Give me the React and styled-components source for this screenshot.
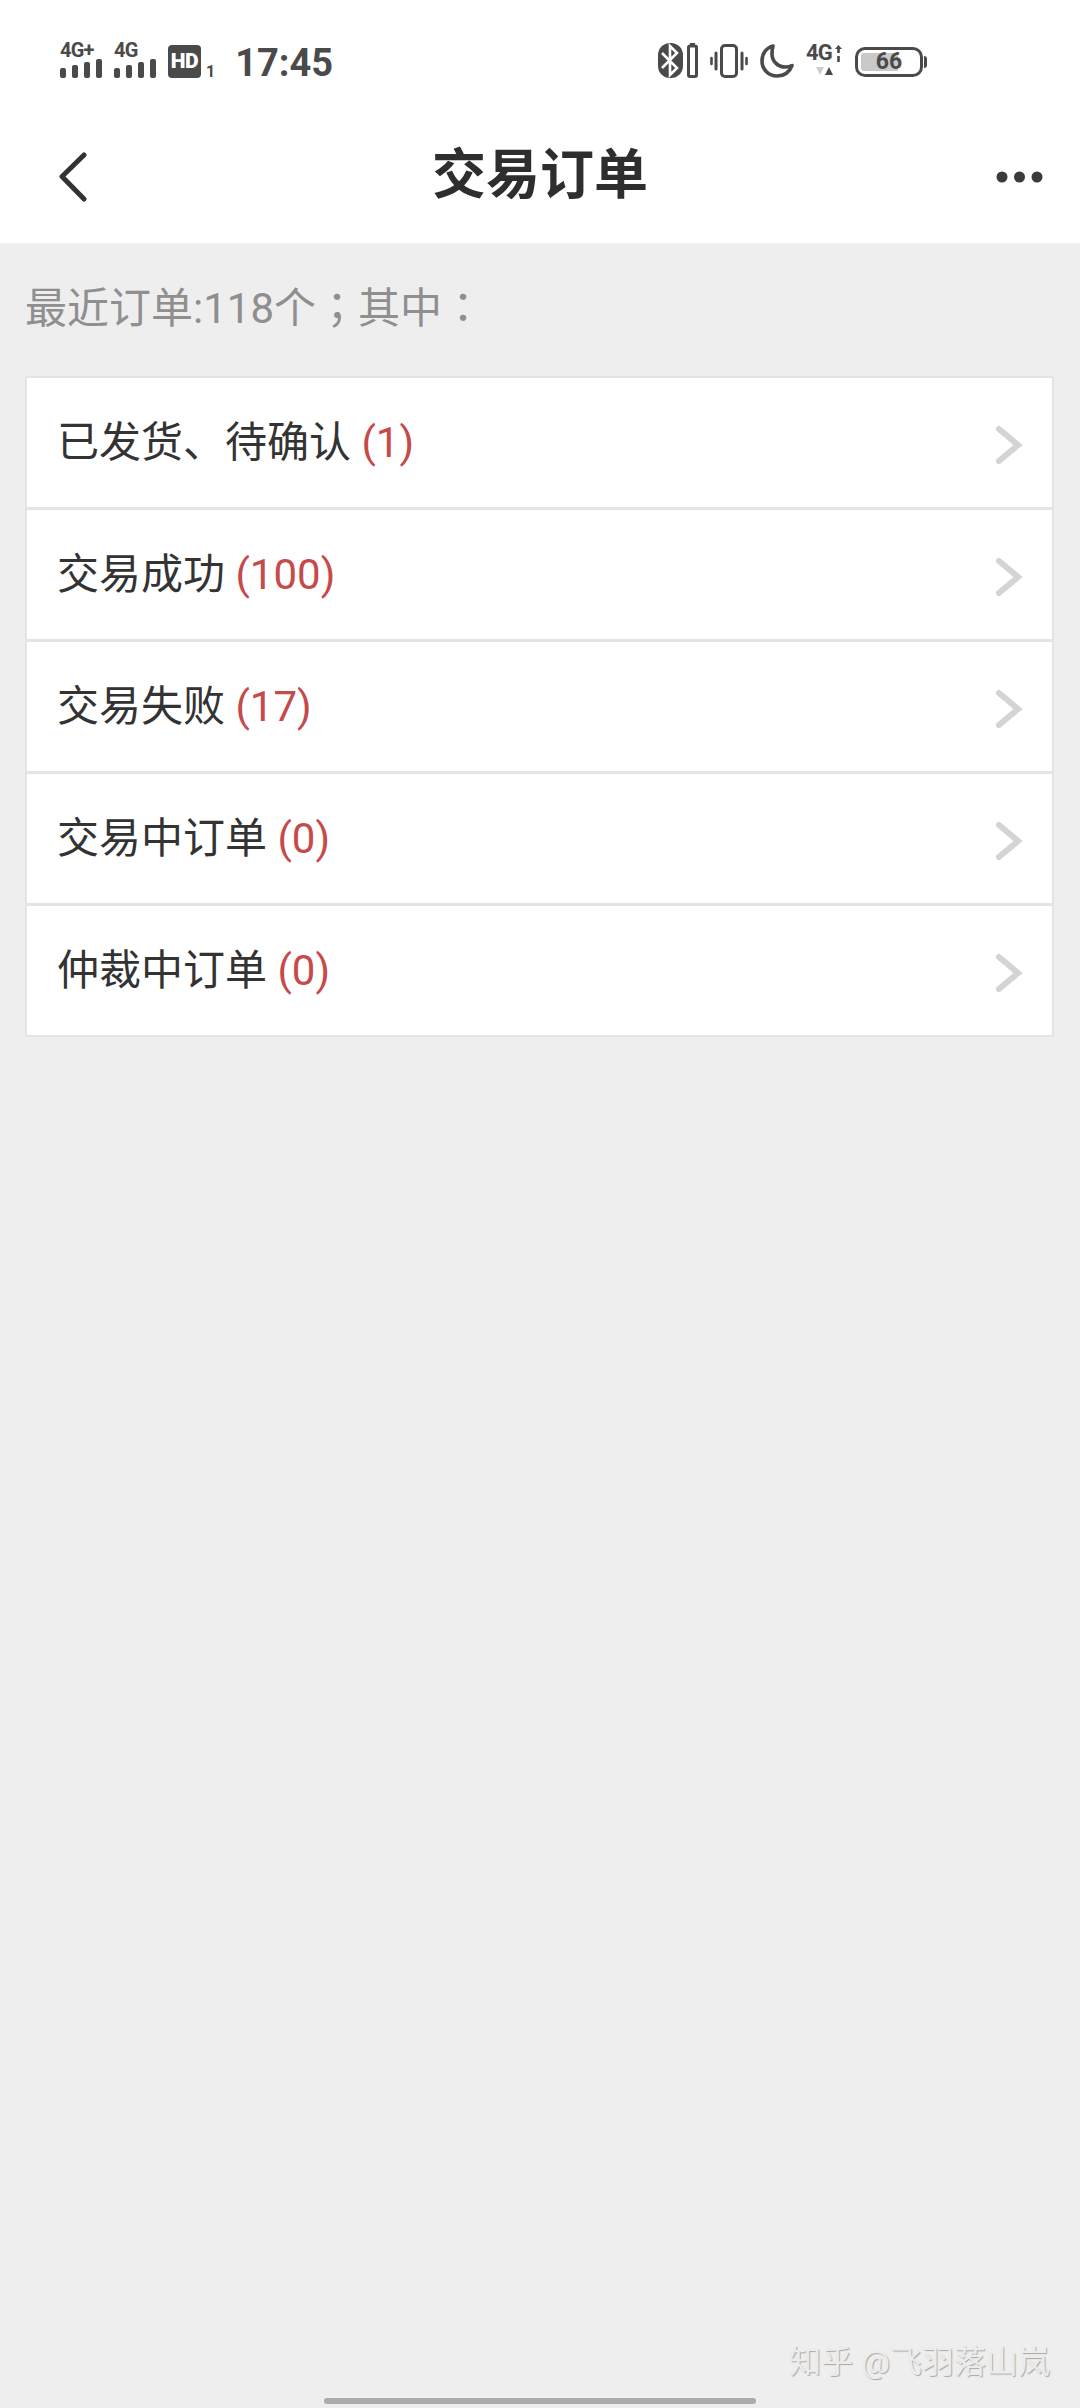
import styled, { createGlobalStyle } from 'styled-components';

const GlobalStyle = createGlobalStyle`
  html, body {
    margin: 0;
    padding: 0;
    background: #eeeeee;
  }
  body {
    font-family: Roboto, "Noto Sans CJK SC", sans-serif;
  }
  * {
    box-sizing: border-box;
  }
`;

const Page = styled.div`
  position: relative;
  width: 1080px;
  height: 2408px;
  display: flex;
  flex-direction: column;
  overflow: hidden;
  background: #eeeeee;
`;

const StatusBar = styled.div`
  height: 120px;
  padding: 0 153px 0 60px;
  display: flex;
  align-items: center;
  justify-content: space-between;
  background: #fff;
  color: #4a4a4a;
`;

const StatusGroup = styled.div`
  display: flex;
  align-items: flex-end;
  height: 35px;
  gap: 12px;
`;

const SignalBlock = styled.div`
  display: flex;
  flex-direction: column;
  width: 42px;
  height: 35px;
`;

const NetLabel = styled.span`
  font-size: 20px;
  line-height: 15px;
  height: 16px;
  font-weight: 700;
  letter-spacing: -0.8px;
  white-space: nowrap;
`;

const Bars = styled.div`
  display: flex;
  align-items: flex-end;
  justify-content: space-between;
  height: 19px;
`;

const Bar = styled.i`
  display: block;
  width: 6px;
  height: ${props => props.$h}px;
  border-radius: 2px;
  background: #4a4a4a;
`;

const HdBadge = styled.span`
  width: 33px;
  height: 33px;
  border-radius: 4px;
  background: #4a4a4a;
  color: #fff;
  font-size: 21px;
  line-height: 33px;
  font-weight: 900;
  text-align: center;
  letter-spacing: -0.5px;
`;

const SimIndex = styled.span`
  font-size: 16px;
  line-height: 13px;
  font-weight: 700;
  margin-left: -7px;
`;

const Clock = styled.span`
  font-size: 38px;
  line-height: 30px;
  font-weight: 700;
  margin-left: 8px;
`;

const NetStack = styled.div`
  position: relative;
  width: 37px;
  height: 35px;
  flex: none;
`;

const NetStackLabel = styled.span`
  display: block;
  font-size: 22px;
  line-height: 20px;
  height: 22px;
  font-weight: 700;
  letter-spacing: -0.8px;
`;

const BatteryWrap = styled.div`
  display: flex;
  align-items: center;
  gap: 1px;
  height: 32px;
`;

const BatteryBody = styled.div`
  position: relative;
  width: 68px;
  height: 30px;
  border: 3px solid #4a4a4a;
  border-radius: 10px;
  padding: 3px;
`;

const BatteryFill = styled.div`
  height: 100%;
  background: #c9c9c9;
  border-radius: 3px 0 0 3px;
`;

const BatteryText = styled.span`
  position: absolute;
  left: 0;
  right: 0;
  top: -1px;
  text-align: center;
  font-size: 23px;
  line-height: 26px;
  font-weight: 700;
`;

const BatteryCap = styled.i`
  display: block;
  width: 3px;
  height: 12px;
  border-radius: 0 3px 3px 0;
  background: #4a4a4a;
`;

const NavBar = styled.header`
  position: relative;
  height: 123px;
  display: flex;
  align-items: center;
  justify-content: space-between;
  padding: 0 37px 10px 58px;
  background: #fff;
`;

const Title = styled.h1`
  position: absolute;
  left: 0;
  right: 0;
  top: 23px;
  margin: 0;
  text-align: center;
  font-size: 54px;
  line-height: 66px;
  font-weight: 700;
  color: #2e2e2e;
`;

const Content = styled.main`
  flex: 1;
  padding: 0 26px 0 25px;
  display: flex;
  flex-direction: column;
`;

const Summary = styled.p`
  margin: 0;
  padding-top: 37px;
  height: 133px;
  font-size: 42px;
  line-height: 50px;
  color: #8f8f8f;
`;

// traditional-chinese cut keeps the punctuation centred in its cell
const CentredMark = styled.span`
  font-family: "Noto Sans CJK TC", sans-serif;
`;

const OrderCard = styled.section`
  display: flex;
  flex-direction: column;
  background: #fff;
  border: 2px solid #e4e4e4;
  border-radius: 2px;
`;

const OrderRow = styled.div`
  height: ${props => (props.$first ? 129 : 132)}px;
  display: flex;
  align-items: center;
  justify-content: space-between;
  padding: 4px 29px 0 30px;
  border-top: ${props => (props.$first ? 'none' : '3px solid #e4e4e4')};
`;

const RowLabel = styled.span`
  font-size: 42px;
  line-height: 50px;
  color: #333;
  margin-top: -4px;
`;

const Count = styled.span`
  color: #c64a4a;
`;

const Watermark = styled.div`
  position: absolute;
  right: 30px;
  bottom: 26px;
  font-size: 32px;
  line-height: 40px;
  color: #ececec;
  text-shadow: 1px 1px 1px #a8a8a8;
  white-space: nowrap;
`;

const HomeIndicator = styled.div`
  position: absolute;
  left: 324px;
  bottom: 4px;
  width: 432px;
  height: 6px;
  border-radius: 3px;
  background: #ababab;
`;

const orders = [
  { label: '已发货、待确认', count: 1 },
  { label: '交易成功', count: 100 },
  { label: '交易失败', count: 17 },
  { label: '交易中订单', count: 0 },
  { label: '仲裁中订单', count: 0 },
];

const SignalBars = () => (
  <Bars>
    <Bar $h={10} />
    <Bar $h={13} />
    <Bar $h={16} />
    <Bar $h={19} />
  </Bars>
);

const BluetoothIcon = () => (
  <svg width="40" height="35" viewBox="0 0 40 35">
    <rect x="0" y="0" width="25" height="35" rx="12" fill="#4a4a4a" />
    <path d="M4 10l15 15-7 7V3l7 7L4 25" fill="none" stroke="#fff" strokeWidth="2.600" />
    <rect x="30.500" y="3" width="8" height="30.500" rx="1.500" fill="#fff" stroke="#4a4a4a" strokeWidth="3" />
    <rect x="32" y="0" width="5" height="4" fill="#4a4a4a" />
  </svg>
);

const VibrateIcon = () => (
  <svg width="38" height="34" viewBox="0 0 38 34" fill="none" stroke="#4a4a4a" strokeLinecap="round">
    <rect x="11.500" y="1.500" width="15" height="31" rx="3.500" strokeWidth="3" />
    <path d="M6 9v16M32 9v16" strokeWidth="3" />
    <path d="M1.500 14v6M36.500 14v6" strokeWidth="2.600" />
  </svg>
);

const MoonIcon = () => (
  <svg width="34" height="34" viewBox="0 0 34 34">
    <path
      d="M13 2C6 4 2 10 2 17c0 8.500 6.800 15 15 15 7 0 12.500-4 15-10.500-2 1-4 1.500-6.500 1.500C17.500 23 12 17 12 10c0-3 .3-5.500 1-8z"
      fill="none"
      stroke="#4a4a4a"
      strokeWidth="3.600"
      strokeLinejoin="round"
    />
  </svg>
);

const TrafficIcon = () => (
  <svg width="37" height="35" viewBox="0 0 37 35" style={{ position: 'absolute', left: 0, top: 0 }}>
    <path d="M10 24h8l-4 8z" fill="#cfcfcf" />
    <path d="M19 32h8l-4-8z" fill="#4a4a4a" />
    <path d="M29 6l3.500-4L36 6z" fill="#4a4a4a" />
    <path d="M32.500 5v5M32.500 13v6" stroke="#4a4a4a" strokeWidth="2.600" />
  </svg>
);

const BackIcon = () => (
  <svg width="30" height="50" viewBox="0 0 30 50">
    <path d="M26 3L4 24.500 26 47" fill="none" stroke="#333" strokeWidth="5" strokeLinecap="round" strokeLinejoin="round" />
  </svg>
);

const MoreIcon = () => (
  <svg width="47" height="12" viewBox="0 0 47 12" fill="#3a3a3a">
    <circle cx="6" cy="6" r="5.500" />
    <circle cx="23.500" cy="6" r="5.500" />
    <circle cx="41" cy="6" r="5.500" />
  </svg>
);

const ChevronIcon = () => (
  <svg width="28" height="40" viewBox="0 0 28 40">
    <path d="M4 4l19 16L4 36" fill="none" stroke="#d4d4d4" strokeWidth="6" strokeLinecap="round" strokeLinejoin="miter" />
  </svg>
);

const App = () => (
  <Page>
    <GlobalStyle />
    <StatusBar>
      <StatusGroup>
        <SignalBlock>
          <NetLabel>4G+</NetLabel>
          <SignalBars />
        </SignalBlock>
        <SignalBlock>
          <NetLabel>4G</NetLabel>
          <SignalBars />
        </SignalBlock>
        <HdBadge>HD</HdBadge>
        <SimIndex>1</SimIndex>
        <Clock>17:45</Clock>
      </StatusGroup>
      <StatusGroup>
        <BluetoothIcon />
        <VibrateIcon />
        <MoonIcon />
        <NetStack>
          <NetStackLabel>4G</NetStackLabel>
          <TrafficIcon />
        </NetStack>
        <BatteryWrap>
          <BatteryBody>
            <BatteryFill style={{ width: '66%' }} />
            <BatteryText>66</BatteryText>
          </BatteryBody>
          <BatteryCap />
        </BatteryWrap>
      </StatusGroup>
    </StatusBar>
    <NavBar>
      <BackIcon />
      <Title>交易订单</Title>
      <MoreIcon />
    </NavBar>
    <Content>
      <Summary>
        最近订单:118个<CentredMark>；</CentredMark>其中<CentredMark>：</CentredMark>
      </Summary>
      <OrderCard>
        {orders.map((order, i) => (
          <OrderRow key={order.label} $first={i === 0}>
            <RowLabel>
              {order.label} <Count>({order.count})</Count>
            </RowLabel>
            <ChevronIcon />
          </OrderRow>
        ))}
      </OrderCard>
    </Content>
    <Watermark>知乎 @飞羽落山岚</Watermark>
    <HomeIndicator />
  </Page>
);

export default App;
